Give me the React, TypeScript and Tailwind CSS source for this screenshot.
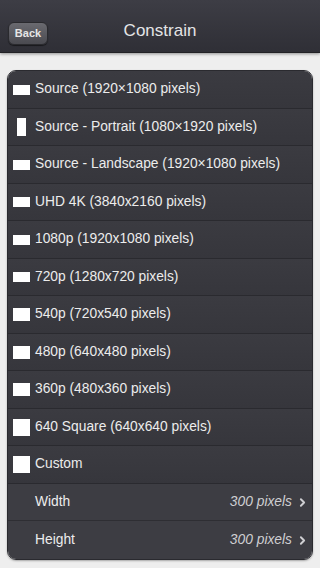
import { ChevronRight } from "lucide-react";

type Preset = { label: string; w: number; h: number };

const presets: Preset[] = [
  { label: "Source (1920×1080 pixels)", w: 17, h: 10 },
  { label: "Source - Portrait (1080×1920 pixels)", w: 9, h: 18 },
  { label: "Source - Landscape (1920×1080 pixels)", w: 17, h: 10 },
  { label: "UHD 4K (3840x2160 pixels)", w: 17, h: 10 },
  { label: "1080p (1920x1080 pixels)", w: 17, h: 10 },
  { label: "720p (1280x720 pixels)", w: 17, h: 10 },
  { label: "540p (720x540 pixels)", w: 17, h: 13 },
  { label: "480p (640x480 pixels)", w: 17, h: 13 },
  { label: "360p (480x360 pixels)", w: 17, h: 13 },
  { label: "640 Square (640x640 pixels)", w: 17, h: 17 },
  { label: "Custom", w: 17, h: 17 },
];

function Row({ p }: { p: Preset }) {
  return (
    <div className="flex h-[37.5px] items-center border-b border-[#2a2a2f] bg-gradient-to-b from-[#3b3b41] to-[#36363c] pl-[5px] pt-[1px]">
      <div className="flex w-[17px] items-center justify-center">
        <div className="bg-white" style={{ width: p.w, height: p.h }} />
      </div>
      <span className="ml-[5px] text-[13.8px] text-[#ececec]">{p.label}</span>
    </div>
  );
}

function ValueRow({ label, value, last }: { label: string; value: string; last?: boolean }) {
  return (
    <div
      className={`flex h-[37.5px] items-center bg-[#3d3d43] pl-[27px] pr-[3px] pt-[1px] ${
        last ? "" : "border-b border-[#2e2e33]"
      }`}
    >
      <span className="flex-1 text-[13.8px] text-[#ececec]">{label}</span>
      <span className="text-[13.8px] italic text-[#cfcfd2]">{value}</span>
      <ChevronRight className="ml-[4px] h-[13px] w-[13px] text-[#cfcfd2]" strokeWidth={3.5} />
    </div>
  );
}

export default function App() {
  return (
    <div
      className="flex h-[568px] w-[320px] flex-col overflow-hidden bg-[#eeeeee]"
      style={{ fontFamily: '"Helvetica Neue", "Liberation Sans", Arial, sans-serif' }}
    >
      <header className="relative flex h-[53px] shrink-0 items-end justify-center border-b border-[#222226] bg-gradient-to-b from-[#3d3d45] to-[#2f2f36] pb-[9px] shadow-[0_1px_3px_rgba(0,0,0,0.4)]">
        <button className="absolute left-[8px] top-[22px] flex h-[23px] w-[40px] items-center justify-center rounded-[6px] border border-[#2a2a2e] bg-gradient-to-b from-[#6a6a70] to-[#4a4a50] text-[11px] font-bold text-[#e6e6e6] shadow-[0_1px_1px_rgba(0,0,0,0.5)]">
          Back
        </button>
        <h1 className="text-[17px] text-[#e4e4e6]">Constrain</h1>
      </header>

      <div className="flex-1 px-[7px] pt-[17px]">
        <div className="overflow-hidden rounded-[9px] border border-[#2a2a2f] shadow-[0_1px_2px_rgba(0,0,0,0.3)]">
          {presets.map((p) => (
            <Row key={p.label} p={p} />
          ))}
          <ValueRow label="Width" value="300 pixels" />
          <ValueRow label="Height" value="300 pixels" last />
        </div>
      </div>
    </div>
  );
}
